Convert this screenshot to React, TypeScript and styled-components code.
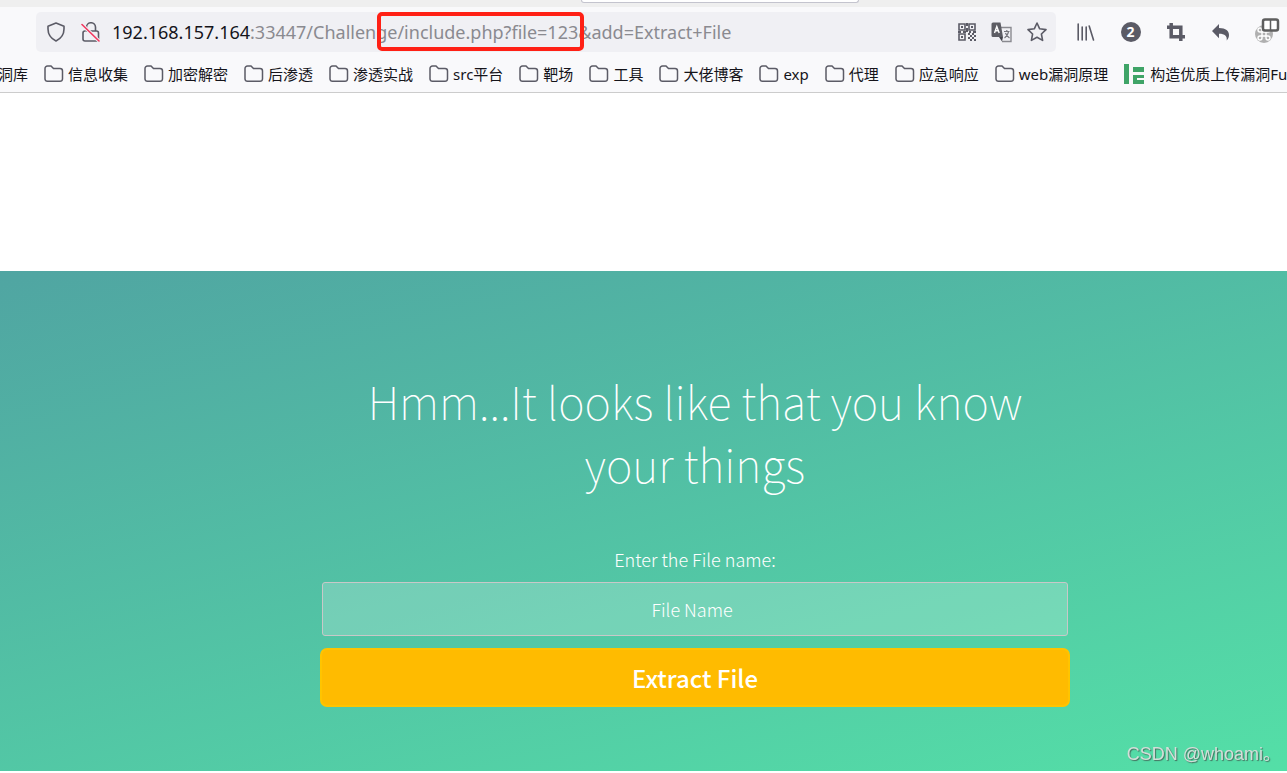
import React from "react";
import styled, { createGlobalStyle } from "styled-components";

const ui = `"Noto Sans", "Noto Sans CJK SC", sans-serif`;
const page = `"Noto Sans CJK SC", sans-serif`;

const Global = createGlobalStyle`
  * { box-sizing: border-box; }
  body { margin: 0; background: #fff; overflow: hidden; font-family: ${ui}; }
`;

const Chrome = styled.header`
  background: #f9f9fb;
  border-bottom: 1px solid #ccc;
`;

const TabStrip = styled.div`
  height: 7px;
  background: #efefef;
  display: flex;
  justify-content: center;
  padding-left: 152px;
`;

const ActiveTab = styled.div`
  width: 278px;
  height: 3px;
  background: #fff;
  border: 1px solid #c4c4ce;
  border-top: 0;
  border-radius: 0 0 4px 4px;
`;

const NavBar = styled.div`
  display: flex;
  align-items: center;
  height: 50px;
  padding-left: 36px;
`;

const UrlBar = styled.div`
  flex: 1;
  display: flex;
  align-items: center;
  height: 40px;
  padding: 0 2px 0 8px;
  border-radius: 5px;
  background: #f0f0f4;
  color: #8a8a90;
`;

const IconButton = styled.button`
  display: flex;
  flex: none;
  align-items: center;
  justify-content: center;
  width: 35px;
  height: 32px;
  padding: 0;
  border: 0;
  background: none;
  color: #5b5b66;
`;

const SiteIcons = styled.div`
  display: flex;
  margin-left: -6px;
`;

const Address = styled.div`
  flex: 1;
  margin-left: 4px;
  font-size: 18px;
  line-height: 24px;
  white-space: nowrap;
`;

const Host = styled.span`
  color: #15141a;
`;

const Marked = styled.span`
  position: relative;
`;

const MarkBox = styled.span`
  position: absolute;
  inset: -8px -6px -7px -20px;
  border: 4px solid #ff2015;
  border-radius: 5px;
`;

const Tools = styled.div`
  display: flex;
  gap: 10px;
  padding-left: 12px;
  margin-right: 4px;
`;

const Bookmarks = styled.nav`
  display: flex;
  align-items: center;
  gap: 16px;
  height: 35px;
  padding-bottom: 2px;
  margin-left: -2px;
  overflow: hidden;
`;

const Bookmark = styled.a`
  display: flex;
  flex: none;
  align-items: center;
  gap: 4px;
  color: #15141a;
  font-size: 15px;
  line-height: 24px;
  text-decoration: none;
  white-space: nowrap;
`;

const Hero = styled.main`
  margin-top: 178px;
  padding: 98px 0 64px 103px;
  background: linear-gradient(165deg, #50a5a2, #54dfa7);
  color: #fff;
  font-family: ${page};
  text-align: center;
`;

const Form = styled.form`
  display: flex;
  flex-direction: column;
  max-width: 750px;
  margin: 0 auto;
`;

const Title = styled.h1`
  margin: 0 0 52px;
  font-size: 45px;
  line-height: 63px;
  font-weight: 100;
`;

const Label = styled.label`
  font-size: 18px;
  line-height: 24px;
  font-weight: 300;
`;

const FileInput = styled.input`
  height: 54px;
  margin: 11px 2px 12px;
  padding: 0 18px 0 12px;
  border: 1px solid #c8c8c8;
  border-radius: 3px;
  background: rgba(255, 255, 255, 0.2);
  color: #fff;
  font: 300 18px ${page};
  text-align: center;
  &::placeholder { color: #fff; opacity: 1; }
`;

const Submit = styled.button`
  height: 59px;
  border: 2px solid #ffc400;
  border-radius: 7px;
  background: #ffbb00;
  color: #fff;
  font: 500 24px ${page};
`;

const Watermark = styled.div`
  position: fixed;
  right: 6px;
  bottom: 6px;
  color: #d4ded9;
  font: 18px/26px "Liberation Sans", "Noto Sans CJK SC", sans-serif;
  text-shadow: 1px 1px 1px #46705f;
`;

const Svg = ({ size = 20, children }: { size?: number; children: React.ReactNode }) => (
  <svg width={size} height={size} viewBox="0 0 20 20" fill="none" stroke="currentColor" strokeWidth="1.6" strokeLinejoin="round" strokeLinecap="round" aria-hidden="true">{children}</svg>
);

const Folder = () => (
  <svg width="20" height="20" viewBox="0 0 20 20" fill="none" stroke="#5b5b66" strokeWidth="1.5" aria-hidden="true">
    <path d="M1 15V4.5A2.5 2.5 0 0 1 3.500 2H7l2.500 2.500H16A2.500 2.500 0 0 1 18.500 7v8A2.500 2.500 0 0 1 16 17.300H3.500A2.500 2.500 0 0 1 1 15Z" />
  </svg>
);

const Shield = () => (
  <Svg><path d="M10 1 18 4.200V7c0 5.500-3 9.500-8 12-5-2.500-8-6.500-8-12V4.200Z" /></Svg>
);

const InsecureLock = () => (
  <Svg>
    <path d="M5.500 9V5.500a4.500 4.500 0 0 1 9-.5v4M6 9h9.500a2 2 0 0 1 2 2v6.500a1.500 1.500 0 0 1-1.500 1.500H4a2 2 0 0 1-2-2v-6a2 2 0 0 1 2-2" />
    <path d="M1 2.500 18 19" stroke="#f0f0f4" strokeWidth="3.500" />
    <path d="M1 2.500 18 19" stroke="#f2385f" />
  </Svg>
);

const QrCode = () => (
  <svg width="20" height="20" viewBox="0 0 20 20" fill="none" stroke="currentColor" strokeWidth="1.600" aria-hidden="true">
    <path d="M2 2h6v6H2zM12 2h6v6h-6zM2 12h6v6H2z" />
    <path d="M4 5h2M14 5h2M4 15h2M10 1v3M10 6v4M1 10h3M6 10h3M12 10h2M16 10h3M11 12h2M15 12h2M13 14h2M17 14h2M11 16h2M15 16h2M13 18h2M17 18h2" strokeWidth="2" />
  </svg>
);

const Translate = () => (
  <svg width="21" height="21" viewBox="0 0 21 21" aria-hidden="true">
    <path d="M9 5.500h11v14H11" fill="#f0f0f4" stroke="#8a8a90" strokeWidth="1.400" />
    <path d="M2 .500h7.500L12 15H2a1.500 1.500 0 0 1-1.500-1.500V2A1.500 1.500 0 0 1 2 .500Z" fill="#5d5d64" />
    <path d="m8 15 3 4.500 1-4.500Z" fill="#44444c" />
    <path d="M3.500 11 5.800 4.500 8.200 11M4.500 8.800h2.800" fill="none" stroke="#fff" strokeWidth="1.400" />
    <path d="M13 9.500h5.500M15.800 8v1.500M17.500 10q-1 4-4 6M14.500 11q1 3 4 5" fill="none" stroke="#77777d" strokeWidth="1.200" />
  </svg>
);

const Star = () => (
  <Svg><path d="m10 1 2.700 5.800 6.300.8-4.600 4.400 1.200 6.400L10 15.300l-5.600 3.100L5.600 12 1 7.600l6.300-.8Z" /></Svg>
);

const Library = () => (
  <Svg><path d="M2.200 2v16M6.200 5v13M10.200 5v13M13.200 4l4.300 14" /></Svg>
);

const CountBadge = styled.span`
  width: 20px;
  height: 20px;
  border-radius: 50%;
  background: #5b5b66;
  color: #fff;
  font: 700 14px/20px ${ui};
`;

const Crop = () => (
  <svg width="20" height="20" viewBox="0 0 20 20" fill="none" stroke="currentColor" strokeWidth="3.500" aria-hidden="true">
    <path d="M5.200 1v13.800H19M1 5.200h13.800V19" />
  </svg>
);

const Back = () => (
  <svg width="20" height="20" viewBox="0 0 20 20" fill="currentColor" aria-hidden="true">
    <path d="M8 2v4c7 0 10 3 10 7 0 2-.800 4-2.300 5.500.600-4.500-1.700-6.800-7.700-6.800v4.500L1 9Z" />
  </svg>
);

const Extension = () => (
  <svg width="28" height="28" viewBox="0 0 28 28" aria-hidden="true">
    <circle cx="12" cy="16" r="9" fill="#b0b0b0" />
    <path d="M10 14h4v4h-4zM10 14H8a2 2 0 1 1 2-2zM14 14v-2a2 2 0 1 1 2 2zM14 18h2a2 2 0 1 1-2 2zM10 18v2a2 2 0 1 1-2-2z" fill="none" stroke="#fff" strokeWidth="1.400" />
    <rect x="11" y="1.500" width="15" height="11" rx="2" fill="#fff" stroke="#5e5e5e" strokeWidth="2.500" />
    <path d="M18.500 2v10" stroke="#5e5e5e" strokeWidth="1.500" />
  </svg>
);

const Favicon = () => (
  <svg width="22" height="20" viewBox="0 0 22 20" fill="#3fa467" aria-hidden="true">
    <path d="M0 0h5v20H0zM9 3h11v5H9zM9 11h11v3H9zM9 11h4v9H9zM9 16h11v4H9z" />
  </svg>
);

const folders = ["信息收集", "加密解密", "后渗透", "渗透实战", "src平台", "靶场", "工具", "大佬博客", "exp", "代理", "应急响应", "web漏洞原理"];

export default function App() {
  return (
    <>
      <Global />
      <Chrome>
        <TabStrip><ActiveTab /></TabStrip>
        <NavBar>
          <UrlBar>
            <SiteIcons>
              <IconButton aria-label="Tracking protection"><Shield /></IconButton>
              <IconButton aria-label="Connection not secure"><InsecureLock /></IconButton>
            </SiteIcons>
            <Address>
              <Host>192.168.157.164</Host>:33447/Challenge<Marked>/include.php?file=123<MarkBox /></Marked>&amp;add=Extract+File
            </Address>
            <IconButton aria-label="QR code"><QrCode /></IconButton>
            <IconButton aria-label="Translate"><Translate /></IconButton>
            <IconButton aria-label="Bookmark this page"><Star /></IconButton>
          </UrlBar>
          <Tools>
            <IconButton aria-label="Library"><Library /></IconButton>
            <IconButton aria-label="Notifications"><CountBadge>2</CountBadge></IconButton>
            <IconButton aria-label="Screenshot"><Crop /></IconButton>
            <IconButton aria-label="Undo"><Back /></IconButton>
            <IconButton aria-label="Extension"><Extension /></IconButton>
          </Tools>
        </NavBar>
        <Bookmarks>
          <Bookmark href="#">洞库</Bookmark>
          {folders.map((name) => (
            <Bookmark href="#" key={name}><Folder />{name}</Bookmark>
          ))}
          <Bookmark href="#"><Favicon />构造优质上传漏洞Fu</Bookmark>
        </Bookmarks>
      </Chrome>
      <Hero>
        <Form onSubmit={(e) => e.preventDefault()}>
          <Title>Hmm...It looks like that you know your things</Title>
          <Label htmlFor="file">Enter the File name:</Label>
          <FileInput id="file" placeholder="File Name" />
          <Submit>Extract File</Submit>
        </Form>
      </Hero>
      <Watermark>CSDN @whoami。</Watermark>
    </>
  );
}
